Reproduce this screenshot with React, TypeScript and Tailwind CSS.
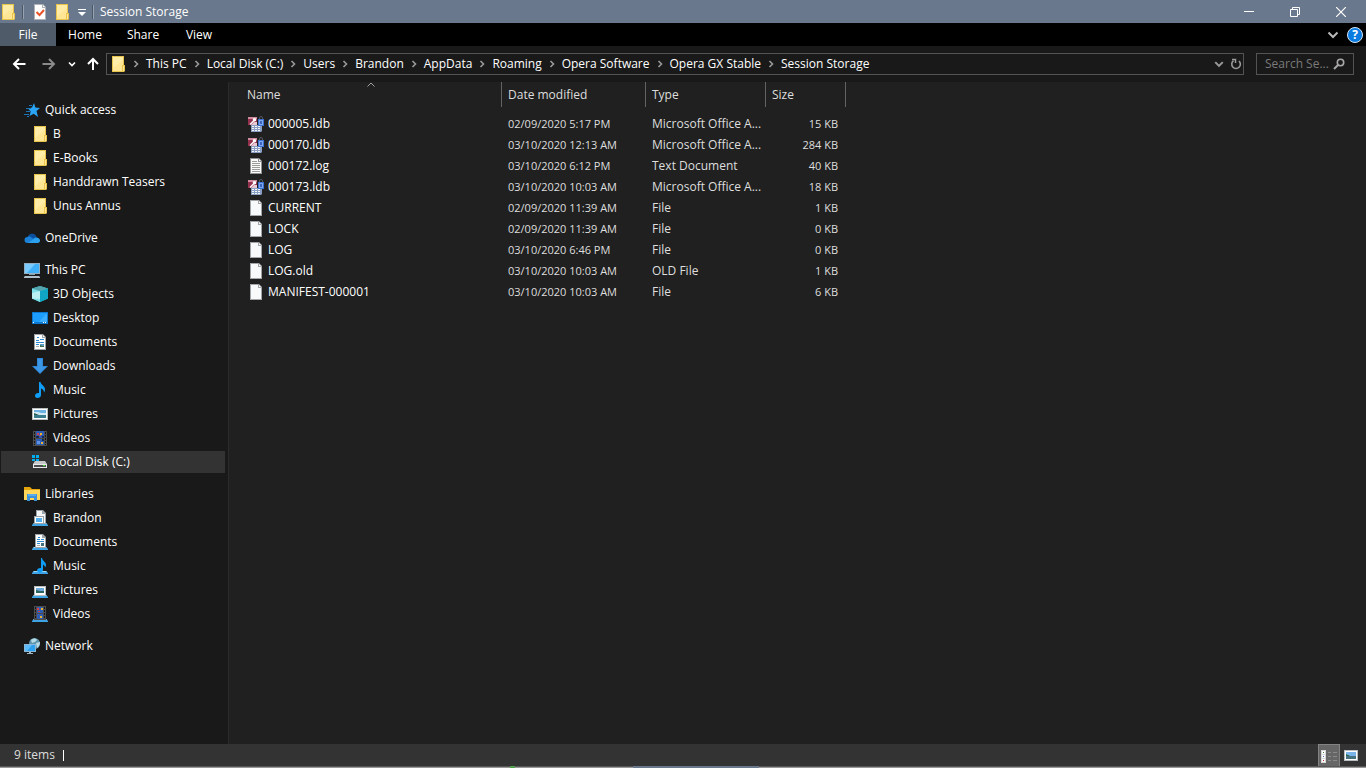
import type { ReactNode } from "react";

type IconProps = { children: ReactNode };

function Icon({ children }: IconProps) {
	return (
		<svg width="16" height="16" viewBox="0 0 16 16" className="shrink-0" fill="none" aria-hidden="true">
			{children}
		</svg>
	);
}

const FolderIcon = () => (
	<Icon>
		<path d="M2 0h12v16H2z" fill="#e9c44c" />
		<path d="M3 1h10v14H3z" fill="#ffe694" />
		<path d="M3 1h10v3L3 12z" fill="#ffeca6" />
		<path d="M12 9h3v6l-1 1h-2z" fill="#e9c44c" />
		<path d="M13 10h1v5h-1z" fill="#ffe694" />
	</Icon>
);

const StarIcon = () => (
	<Icon>
		<path d="M10 1l1.300 4.600L16 6l-3.500 3L14 15l-4.300-3.200L5.500 14l1.200-4.600L4 6.400l4-.8z" fill="#2aa5f5" />
		<path d="M5 3.500h3M2 6.500h5M2 9.500h4M0 12.500h5M3 14.500h2" stroke="#1b74b8" />
	</Icon>
);

const OneDriveIcon = () => (
	<Icon>
		<path d="M3 8.500a5 4.500 0 0 1 9.500-1L9 11z" fill="#0a64bb" />
		<path d="M5 5a4.500 4.500 0 0 1 7.500 2L9 9z" fill="#0c4f9e" />
		<path d="M3.500 7C6 6 8 8 15 12a2 2 0 0 1-2 1H3.500a3 3 0 0 1 0-6z" fill="#1b80d6" />
		<path d="M9 9.500c2-3 6-2.500 7 .5a2.600 2.600 0 0 1-2 3H4z" fill="#2ba0ec" />
	</Icon>
);

const ComputerIcon = () => (
	<Icon>
		<path d="M0 1h16v11H0z" fill="#93aebf" />
		<path d="M1 2h14v9H1z" fill="#3fb0fa" />
		<path d="M1 2h10L3 11H1z" fill="#79caff" />
		<path d="M4 12h8v1H4z" fill="#191919" />
		<path d="M5 12h6v1H5z" fill="#8aa0ae" />
		<path d="M1 14h14l1 1v1H0v-1z" fill="#aebfc9" />
	</Icon>
);

const CubeIcon = () => (
	<Icon>
		<path d="M8 0l8 2.500v10L8 16 0 12.500v-10z" fill="#35c5d8" />
		<path d="M0 2.500L8 5v11l-8-3.500z" fill="#7fe0e8" />
		<path d="M0 7l8-2v8l-8-.5z" fill="#b9f1f3" />
		<path d="M8 5l8-2.500v10L8 16z" fill="#10a5c4" />
		<path d="M8 0l8 2.500L8 5 0 2.500z" fill="#54a3ad" />
	</Icon>
);

const DesktopIcon = () => (
	<Icon>
		<path d="M0 2h16v12H0z" fill="#0d78cf" />
		<path d="M1 3h14v9H1z" fill="#1d9dfd" />
		<path d="M15 3v9H7z" fill="#3aadff" />
		<path d="M1 12h1v1H1zM11 12h1v1h-1zM13 12h1v1h-1z" fill="#fff" />
	</Icon>
);

const DocumentIcon = () => (
	<Icon>
		<path d="M2 0h9l3 3v13H2z" fill="#9da3a7" />
		<path d="M3 1h7v3h3v11H3z" fill="#fff" />
		<path d="M11 1l2 2h-2z" fill="#fff" />
		<path d="M4 6.500h3M5 3.500h2M8 5.500h4M4 8.500h8M4 10.500h3" stroke="#2c8bd4" />
		<path d="M4 12.500h3" stroke="#a9adb0" />
		<path d="M8 10h4v3H8z" fill="#5b9bc8" />
		<path d="M8 11l2 1h2v1H8z" fill="#3f6f4a" />
	</Icon>
);

const DownloadIcon = () => (
	<Icon>
		<path d="M5 0h6v8h5l-8 8-8-8h5z" fill="#2f86d6" />
		<path d="M6 1h4v8h4l-6 6-6-6h4z" fill="#3b97e6" />
	</Icon>
);

const MusicIcon = () => (
	<Icon>
		<path d="M7 0h1.500c.5 3 5 4 4.500 8-.2 1-.5 2-1 2.500C12 8 10.500 7 9 6.500V13c0 2-1.500 3-3.500 3S3 15 3 13.500 5 10.500 7 11z" fill="#0f9df5" />
	</Icon>
);

const PictureIcon = () => (
	<Icon>
		<path d="M0 2h16v12H0z" fill="#b9bdc0" />
		<path d="M1 3h14v10H1z" fill="#fff" />
		<path d="M2 4h12v8H2z" fill="#6db1e4" />
		<path d="M2 6h4l3 1h5v2H2z" fill="#d3e9f5" />
		<path d="M2 8l4 1h8v3H2z" fill="#3a7d91" />
		<path d="M2 7l5 2H2z" fill="#285c4c" />
	</Icon>
);

const FilmIcon = () => (
	<Icon>
		<path d="M1 1h14v15H1z" fill="#4d4d4d" />
		<path d="M4 1h8v7H4zM4 9h8v6H4z" fill="#2c5cb4" />
		<path d="M2.500 2v13M13.500 2v13" stroke="#141414" strokeDasharray="2 1" />
		<path d="M5 3h2v2H5zM7 5h2v1H7z" fill="#db3b44" />
		<path d="M8 3h2v2H8zM9 12h2v2H9z" fill="#eab52a" />
		<path d="M5 11h3v3H5z" fill="#5f93e1" />
		<path d="M4 6h3v2H4zM10 6h2v2h-2zM10 9h2v2h-2z" fill="#18294f" />
	</Icon>
);

const DiskIcon = () => (
	<Icon>
		<path d="M0 1h3v3H0zM4 1h3v3H4zM0 5h3v2H0zM4 5h3v2H4z" fill="#00adef" />
		<path d="M3 7h10l2 3H1z" fill="#c6c8c9" />
		<path d="M1 10h14v4H1z" fill="#e8e8e8" />
		<path d="M2 11h12v2H2z" fill="#4a4d4f" />
		<path d="M11 11h2v1h-2z" fill="#4ee53d" />
	</Icon>
);

const LibrariesIcon = () => (
	<Icon>
		<path d="M0 1h6l2 2h8v11H0z" fill="#e5a50d" />
		<path d="M0 4h16v10H0z" fill="#ffd65a" />
		<path d="M3 8h10v7h-3v-3H6v3H3z" fill="#3a92dc" />
		<path d="M4 8h8v2H4z" fill="#5aadea" />
	</Icon>
);

const Stand = () => (
	<>
		<path d="M2 13h12l2 2v1H0v-1z" fill="#3fa4e6" />
		<path d="M2 13h12l1 1H1z" fill="#9cd8fa" />
	</>
);

const LibraryCustomIcon = () => (
	<Icon>
		<Stand />
		<path d="M4 0h7l3 3v11H4z" fill="#9da3a7" />
		<path d="M5 1h5v3h3v9H5z" fill="#f4f6f7" />
		<path d="M2 6h10v8H2z" fill="#9da3a7" />
		<path d="M3 7h8v6H3z" fill="#fff" />
		<path d="M4 8h6v4H4z" fill="#56b0ef" />
	</Icon>
);

const LibraryDocumentIcon = () => (
	<Icon>
		<Stand />
		<path d="M3 0h8l3 3v11H3z" fill="#9da3a7" />
		<path d="M4 1h6v3h3v9H4z" fill="#fff" />
		<path d="M6 3.500h2M5 5.500h3M9 5.500h3M5 7.500h7M5 9.500h3" stroke="#2c8bd4" />
		<path d="M5 11.500h3" stroke="#a9adb0" />
		<path d="M9 9h3v3H9z" fill="#41727c" />
	</Icon>
);

const LibraryMusicIcon = () => (
	<Icon>
		<Stand />
		<path d="M9 0h1c.5 3 4 4 4 7 0 1-.5 2-1 2.500C13 8 12 7 11 6.500V12c0 1.500-1.500 2.500-3.500 2.500S5 13 5 12s2-2.500 4-2z" fill="#0f9df5" />
	</Icon>
);

const LibraryPictureIcon = () => (
	<Icon>
		<Stand />
		<path d="M2 4h12v10H2z" fill="#b9bdc0" />
		<path d="M3 5h10v8H3z" fill="#fff" />
		<path d="M4 6h8v5H4z" fill="#6fa9dc" />
		<path d="M4 8l4 1h4v2H4z" fill="#2e655e" />
	</Icon>
);

const LibraryVideoIcon = () => (
	<Icon>
		<Stand />
		<path d="M2 0h12v14H2z" fill="#4d4d4d" />
		<path d="M5 1h6v6H5zM5 8h6v5H5z" fill="#2c5cb4" />
		<path d="M3.500 1v12M12.500 1v12" stroke="#141414" strokeDasharray="2 1" />
		<path d="M5 2h2v2H5zM6 5h2v1H6z" fill="#db3b44" />
		<path d="M9 2h2v2H9zM8 10h2v2H8z" fill="#eab52a" />
	</Icon>
);

const NetworkIcon = () => (
	<Icon>
		<circle cx="10.500" cy="5.500" r="5.500" fill="#5d93ac" />
		<path d="M7 2c2-2 5-2 6 0l-2 2-3 1zM12 5l4-1c0 3-1 5-3 6z" fill="#b6dbe4" />
		<path d="M0 6h12v8H0z" fill="#8ab9d8" />
		<path d="M1 7h10v6H1z" fill="#2c9fee" />
		<path d="M1 7h7l-5 6H1z" fill="#5dbbfa" />
		<path d="M5 14h2v1H5zM3 15h6v1H3z" fill="#a5b8c4" />
	</Icon>
);

const AccessLockIcon = () => (
	<Icon>
		<path d="M3 9h11v6l-1 1H3z" fill="#8b9fc2" />
		<path d="M4 10h2v1H4zM7 10h2v1H7zM10 10h2v1h-2zM4 12h2v1H4zM7 12h2v1H7zM10 12h2v1h-2zM4 14h2v1H4zM7 14h2v1H7zM10 14h2v1h-2z" fill="#f2f6fc" />
		<path d="M0 1h9v8H0z" fill="#96304f" />
		<path d="M0 1h9v2H0z" fill="#cf8a9e" />
		<path d="M3 9l3-3h3v3z" fill="#e8c8d2" />
		<path d="M2 8.500L6 4.500" stroke="#fff" strokeWidth="1.500" />
		<circle cx="6.500" cy="3.800" r="1.800" fill="#fff" />
		<path d="M11.500 3.500V2a1.500 1.500 0 0 1 3 0v1.500" stroke="#55585f" />
		<path d="M10 3h6v7h-6z" fill="#3b6fd0" />
		<path d="M11 4h4v5h-4z" fill="#7fa9ef" />
		<path d="M12 5h2v3h-2z" fill="#3c66bd" />
	</Icon>
);

const BlankFileIcon = () => (
	<Icon>
		<path d="M2 0h9l3 3v13H2z" fill="#a3a6a8" />
		<path d="M3 1h7v3h3v11H3z" fill="#f8f9fa" />
		<path d="M11 1l2 2h-2z" fill="#fff" />
	</Icon>
);

const TextFileIcon = () => (
	<Icon>
		<path d="M2 0h9l3 3v13H2z" fill="#8f9193" />
		<path d="M3 1h7v3h3v11H3z" fill="#f8f9fa" />
		<path d="M11 1l2 2h-2z" fill="#fff" />
		<path d="M4 3.500h5M4 5.500h8M4 7.500h8M4 9.500h8M4 11.500h8M4 13.500h8" stroke="#9c9c96" />
	</Icon>
);

const CheckDocIcon = () => (
	<Icon>
		<path d="M2 0h9l3 3v13H2z" fill="#aeb2b6" />
		<path d="M3 1h7v3h3v11H3z" fill="#fff" />
		<path d="M11 1l2 2h-2z" fill="#fff" />
		<path d="M4.500 8l3 3L12 6" stroke="#e8532a" strokeWidth="2" />
	</Icon>
);

const Chevron = ({ size = 8, className = "" }: { size?: number; className?: string }) => (
	<svg width={size} height={size} viewBox="0 0 8 8" fill="none" className={className} aria-hidden="true">
		<path d="M1 2.500l3 3 3-3" stroke="currentColor" strokeWidth="1.600" />
	</svg>
);

interface NavItem {
	label: string;
	Icon: () => ReactNode;
	active?: boolean;
}

const groups: { root: NavItem; items: NavItem[] }[] = [
	{
		root: { label: "Quick access", Icon: StarIcon },
		items: [
			{ label: "B", Icon: FolderIcon },
			{ label: "E-Books", Icon: FolderIcon },
			{ label: "Handdrawn Teasers", Icon: FolderIcon },
			{ label: "Unus Annus", Icon: FolderIcon },
		],
	},
	{ root: { label: "OneDrive", Icon: OneDriveIcon }, items: [] },
	{
		root: { label: "This PC", Icon: ComputerIcon },
		items: [
			{ label: "3D Objects", Icon: CubeIcon },
			{ label: "Desktop", Icon: DesktopIcon },
			{ label: "Documents", Icon: DocumentIcon },
			{ label: "Downloads", Icon: DownloadIcon },
			{ label: "Music", Icon: MusicIcon },
			{ label: "Pictures", Icon: PictureIcon },
			{ label: "Videos", Icon: FilmIcon },
			{ label: "Local Disk (C:)", Icon: DiskIcon, active: true },
		],
	},
	{
		root: { label: "Libraries", Icon: LibrariesIcon },
		items: [
			{ label: "Brandon", Icon: LibraryCustomIcon },
			{ label: "Documents", Icon: LibraryDocumentIcon },
			{ label: "Music", Icon: LibraryMusicIcon },
			{ label: "Pictures", Icon: LibraryPictureIcon },
			{ label: "Videos", Icon: LibraryVideoIcon },
		],
	},
	{ root: { label: "Network", Icon: NetworkIcon }, items: [] },
];

const crumbs = [
	"This PC",
	"Local Disk (C:)",
	"Users",
	"Brandon",
	"AppData",
	"Roaming",
	"Opera Software",
	"Opera GX Stable",
	"Session Storage",
];

const files = [
	{ name: "000005.ldb", date: "02/09/2020 5:17 PM", type: "Microsoft Office A...", size: "15 KB", Icon: AccessLockIcon },
	{ name: "000170.ldb", date: "03/10/2020 12:13 AM", type: "Microsoft Office A...", size: "284 KB", Icon: AccessLockIcon },
	{ name: "000172.log", date: "03/10/2020 6:12 PM", type: "Text Document", size: "40 KB", Icon: TextFileIcon },
	{ name: "000173.ldb", date: "03/10/2020 10:03 AM", type: "Microsoft Office A...", size: "18 KB", Icon: AccessLockIcon },
	{ name: "CURRENT", date: "02/09/2020 11:39 AM", type: "File", size: "1 KB", Icon: BlankFileIcon },
	{ name: "LOCK", date: "02/09/2020 11:39 AM", type: "File", size: "0 KB", Icon: BlankFileIcon },
	{ name: "LOG", date: "03/10/2020 6:46 PM", type: "File", size: "0 KB", Icon: BlankFileIcon },
	{ name: "LOG.old", date: "03/10/2020 10:03 AM", type: "OLD File", size: "1 KB", Icon: BlankFileIcon },
	{ name: "MANIFEST-000001", date: "03/10/2020 10:03 AM", type: "File", size: "6 KB", Icon: BlankFileIcon },
];

function TitleBar() {
	return (
		<header className="flex h-[23px] shrink-0 items-center bg-[#69788c] pr-0.5">
			<FolderIcon />
			<span className="ml-1.5 h-3.5 w-0.5 border-x border-l-[#4c5867] border-r-[#98a3b1]" />
			<button type="button" aria-label="Properties" className="ml-2">
				<CheckDocIcon />
			</button>
			<button type="button" aria-label="New folder" className="ml-1.5">
				<FolderIcon />
			</button>
			<button type="button" aria-label="Customize Quick Access Toolbar" className="ml-2">
				<svg width="8" height="8" viewBox="0 0 8 8" aria-hidden="true">
					<path d="M0 1h8v1H0zM0 4h8L4 8z" fill="#fff" />
				</svg>
			</button>
			<span className="ml-1.5 h-3.5 w-0.5 border-x border-l-[#4c5867] border-r-[#98a3b1]" />
			<h1 className="ml-1.5 flex-1 text-white">Session Storage</h1>
			<button type="button" aria-label="Minimize" className="flex h-5 w-[46px] items-center justify-center">
				<svg width="10" height="10" viewBox="0 0 10 10" aria-hidden="true">
					<path d="M0 4h10v1H0z" fill="#fff" />
				</svg>
			</button>
			<button type="button" aria-label="Restore" className="flex h-5 w-[46px] items-center justify-center">
				<svg width="10" height="10" viewBox="0 0 10 10" fill="none" aria-hidden="true">
					<path d="M.5 2.500h7v7h-7zM2.500 2V.5h7v7H8" stroke="#fff" />
				</svg>
			</button>
			<button type="button" aria-label="Close" className="flex h-5 w-[46px] items-center justify-center">
				<svg width="10" height="10" viewBox="0 0 10 10" fill="none" aria-hidden="true">
					<path d="M0 0l10 10M10 0L0 10" stroke="#fff" strokeWidth="1.200" />
				</svg>
			</button>
		</header>
	);
}

function RibbonTabs() {
	return (
		<div className="flex h-[23px] shrink-0 items-center bg-black pr-[3px] text-white">
			<button type="button" className="h-full w-14 bg-[#4f5b68]">File</button>
			<button type="button" className="h-full w-[58px]">Home</button>
			<button type="button" className="h-full w-[58px]">Share</button>
			<button type="button" className="h-full w-[54px]">View</button>
			<div className="flex-1" />
			<button type="button" aria-label="Expand the Ribbon" className="mr-2 text-[#b8b8b8]">
				<svg width="12" height="10" viewBox="0 0 12 10" fill="none" aria-hidden="true">
					<path d="M1.500 2.500L6 7l4.500-4.500" stroke="currentColor" strokeWidth="2" />
				</svg>
			</button>
			<button
				type="button"
				aria-label="Help"
				className="flex size-4 items-center justify-center rounded-full border border-[#d5e6f5] bg-[#0a7be0] font-bold leading-3"
			>
				?
			</button>
		</div>
	);
}

function AddressBar() {
	return (
		<div className="flex h-9 shrink-0 items-center bg-[#191919] px-3 text-white">
			<button type="button" aria-label="Back">
				<svg width="14" height="14" viewBox="0 0 14 14" fill="none" aria-hidden="true">
					<path d="M7 2L2 7l5 5M2 7h11.500" stroke="#fff" strokeWidth="2" />
				</svg>
			</button>
			<button type="button" aria-label="Forward" className="ml-4">
				<svg width="14" height="14" viewBox="0 0 14 14" fill="none" aria-hidden="true">
					<path d="M7 2l5 5-5 5M12 7H.5" stroke="#8a8a8a" strokeWidth="2" />
				</svg>
			</button>
			<button type="button" aria-label="Recent locations" className="ml-3">
				<Chevron />
			</button>
			<button type="button" aria-label="Up" className="ml-2.5">
				<svg width="14" height="14" viewBox="0 0 14 14" fill="none" aria-hidden="true">
					<path d="M2 7l5-5 5 5M7 2v11" stroke="#fff" strokeWidth="2" />
				</svg>
			</button>
			<nav aria-label="Path" className="ml-1.5 flex h-[22px] flex-1 items-center border border-[#535353] pl-[3px]">
				<FolderIcon />
				{crumbs.map((crumb) => (
					<span key={crumb} className="flex items-center">
						<Chevron className="mx-1.5 -rotate-90 text-[#9a9a9a]" />
						<button type="button" className="whitespace-nowrap">{crumb}</button>
					</span>
				))}
				<div className="flex-1" />
				<button type="button" aria-label="Previous locations" className="pr-1.5 text-[#9a9a9a]">
					<Chevron size={10} />
				</button>
				<button type="button" aria-label="Refresh" className="pr-px">
					<svg width="12" height="12" viewBox="0 0 12 12" fill="none" aria-hidden="true">
						<path d="M9 3a4.300 4.300 0 1 1-5.500-.3" stroke="#9a9a9a" strokeWidth="1.600" />
						<path d="M2 1.500h3.500V5" stroke="#9a9a9a" strokeWidth="1.500" />
					</svg>
				</button>
			</nav>
			<label className="ml-3 flex h-[22px] w-[98px] items-center border border-[#535353] pl-2">
				<input
					type="text"
					aria-label="Search Session Storage"
					placeholder="Search Se..."
					className="min-w-0 flex-1 bg-transparent outline-none placeholder:text-[#7a7a7a]"
				/>
				<svg width="12" height="12" viewBox="0 0 12 12" fill="none" className="mr-2 shrink-0" aria-hidden="true">
					<circle cx="7.500" cy="4.500" r="3.200" stroke="#a8a8a8" strokeWidth="1.600" />
					<path d="M5 7L1 11" stroke="#a8a8a8" strokeWidth="2" />
				</svg>
			</label>
		</div>
	);
}

function NavRow({ item, child = false }: { item: NavItem; child?: boolean }) {
	return (
		<li className="py-px">
			<button
				type="button"
				className={`flex h-[22px] w-full items-center gap-[5px] text-left ${child ? "pl-[31px]" : "pl-[23px]"} ${
					item.active ? "bg-[#333333]" : ""
				}`}
			>
				<item.Icon />
				{item.label}
			</button>
		</li>
	);
}

function Sidebar() {
	return (
		<nav
			aria-label="Folders"
			className="flex w-[229px] shrink-0 flex-col gap-2 border-[#2b2b2b] border-r bg-[#191919] pt-4 pr-[3px] pb-4 pl-px text-white"
		>
			{groups.map((group) => (
				<ul key={group.root.label}>
					<NavRow item={group.root} />
					{group.items.map((item) => (
						<NavRow key={item.label} item={item} child />
					))}
				</ul>
			))}
		</nav>
	);
}

function FileTable() {
	return (
		<main className="min-w-0 flex-1 pl-3">
			<table className="w-[605px] table-fixed border-separate border-spacing-0 text-left">
				<thead className="text-[#dedede]">
					<tr className="h-[25px]">
						<th className="relative w-[261px] border-[#636363] border-r pl-1.5 font-normal">
							Name
							<svg width="8" height="5" viewBox="0 0 8 5" fill="none" className="absolute top-0 left-[126px]" aria-hidden="true">
								<path d="M.5 4.500L4 1l3.500 3.500" stroke="#a0a0a0" />
							</svg>
						</th>
						<th className="w-36 border-[#636363] border-r pl-1.5 font-normal">Date modified</th>
						<th className="w-[120px] border-[#636363] border-r pl-1.5 font-normal">Type</th>
						<th className="w-20 border-[#636363] border-r pl-1.5 font-normal">Size</th>
					</tr>
				</thead>
				<tbody className="text-[#dedede] before:block before:h-1.5">
					{files.map((file) => (
						<tr key={file.name} className="h-[21px]">
							<td className="pl-[7px] text-white">
								<span className="flex items-center gap-1">
									<file.Icon />
									{file.name}
								</span>
							</td>
							<td className="whitespace-nowrap pl-1.5 text-[11px]">{file.date}</td>
							<td className="whitespace-nowrap pl-1.5">{file.type}</td>
							<td className="pr-2 text-right text-[11px]">{file.size}</td>
						</tr>
					))}
				</tbody>
			</table>
		</main>
	);
}

function StatusBar() {
	return (
		<footer className="flex h-6 shrink-0 flex-col bg-[#333333]">
			<div className="flex flex-1 items-center pl-3.5 text-[#dedede]">
				<span>9 items</span>
				<span className="ml-2 h-[11px] w-px bg-white" />
				<div className="flex-1" />
				<button
					type="button"
					aria-label="Details view"
					className="flex h-full w-[22px] items-center justify-center border border-[#838383] border-b-0 bg-[#666666]"
				>
					<Icon>
						<path d="M0 2h5v13H0z" fill="#d8d8d8" />
						<path d="M1 3h3v3H1zM1 7h3v3H1zM1 11h3v3H1z" fill="#fff" />
						<path d="M2 4h1v1H2z" fill="#4a7a52" />
						<path d="M2 8h1v1H2z" fill="#3b74c4" />
						<path d="M2 12h1v1H2z" fill="#c22f2f" />
						<path d="M7 4.500h3M12 4.500h4M7 8.500h3M12 8.500h4M7 12.500h3M12 12.500h4" stroke="#8a8a8a" />
					</Icon>
				</button>
				<button type="button" aria-label="Large icons view" className="mr-2 ml-1">
					<svg width="14" height="11" viewBox="0 0 14 11" aria-hidden="true">
						<path d="M0 0h14v11H0z" fill="#b9bdc0" />
						<path d="M1 1h12v9H1z" fill="#fff" />
						<path d="M2 2h10v7H2z" fill="#7ab3ea" />
						<path d="M2 5l4 1h6v3H2z" fill="#46727f" />
						<path d="M2 4l4 2H2z" fill="#2b6650" />
					</svg>
				</button>
			</div>
			<div className="flex h-0.5">
				<span className="w-[510px] border-[#565656] border-t bg-[#989898]" />
				<span className="w-[5px] bg-[#4fa04a]" />
				<span className="w-[118px] border-[#565656] border-t bg-[#989898]" />
				<span className="w-[126px] bg-[#69788c]" />
				<span className="flex-1 border-[#565656] border-t bg-[#989898]" />
			</div>
		</footer>
	);
}

export default function App() {
	return (
		<div className="flex min-h-screen flex-col bg-[#202020] font-['Open_Sans','Noto_Sans',sans-serif] text-xs leading-4">
			<TitleBar />
			<RibbonTabs />
			<AddressBar />
			<div className="flex flex-1">
				<Sidebar />
				<FileTable />
			</div>
			<StatusBar />
		</div>
	);
}
